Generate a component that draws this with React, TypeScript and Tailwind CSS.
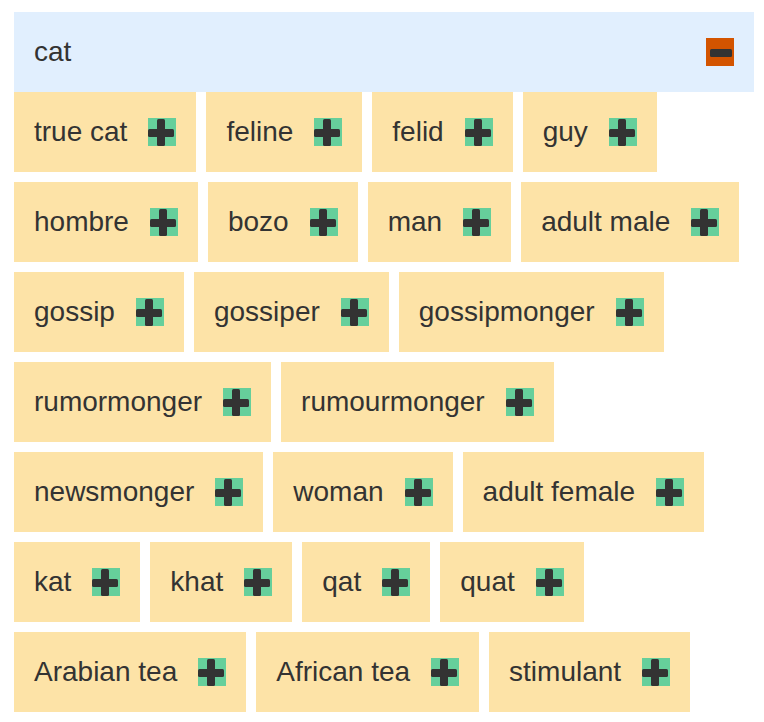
const words = [
  'true cat', 'feline', 'felid', 'guy',
  'hombre', 'bozo', 'man', 'adult male',
  'gossip', 'gossiper', 'gossipmonger',
  'rumormonger', 'rumourmonger',
  'newsmonger', 'woman', 'adult female',
  'kat', 'khat', 'qat', 'quat',
  'Arabian tea', 'African tea', 'stimulant',
]

function PlusIcon() {
  return (
    <svg width="28" height="28" viewBox="0 0 28 28" className="shrink-0">
      <rect width="28" height="28" fill="#66cf9b" />
      <rect x="0" y="11" width="26" height="8" rx="1.5" fill="#333" />
      <rect x="9" y="1" width="8" height="27" rx="1.5" fill="#333" />
    </svg>
  )
}

function MinusIcon() {
  return (
    <svg width="28" height="28" viewBox="0 0 28 28" className="shrink-0">
      <rect width="28" height="28" fill="#d35400" />
      <rect x="4" y="11" width="22" height="8" rx="1.5" fill="#333" />
    </svg>
  )
}

export default function App() {
  return (
    <div className="bg-white pl-[14px] pr-[10px] pt-3 pb-[10px] text-[#333] font-['Liberation_Sans',Arial,sans-serif]">
      {/* Search term */}
      <div className="h-20 flex items-center justify-between px-5 bg-[#e1effe]">
        <span className="text-[28px] leading-10">cat</span>
        <MinusIcon />
      </div>

      {/* Synonyms */}
      <div className="flex flex-wrap gap-[10px]">
        {words.map(w => (
          <div key={w} className="h-20 flex items-center px-5 bg-[#fde3a7]">
            <span className="text-[28px] leading-10 whitespace-nowrap">{w}</span>
            <span className="ml-[21px] flex">
              <PlusIcon />
            </span>
          </div>
        ))}
      </div>
    </div>
  )
}
